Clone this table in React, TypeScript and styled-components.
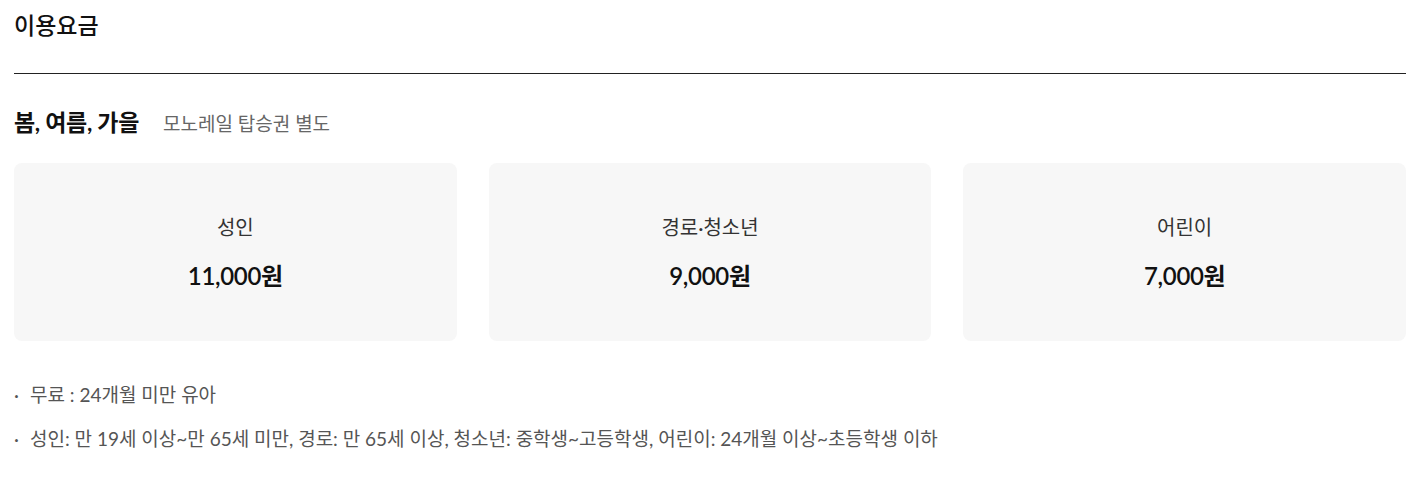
import React from "react";
import styled, { createGlobalStyle } from "styled-components";

const Global = createGlobalStyle`
  html, body { margin: 0; padding: 0; background: #fff; }
  body { font-family: Lato, "Noto Sans CJK KR", sans-serif; color: #111; }
`;

const Page = styled.div`
  padding: 0 14px;
`;

const Title = styled.h2`
  margin: 0;
  padding-top: 9px;
  height: 74px;
  box-sizing: border-box;
  font-size: 23px;
  font-weight: 500;
  line-height: 32px;
  color: #111;
  border-bottom: 1px solid #222;
`;

const SeasonRow = styled.div`
  display: flex;
  align-items: baseline;
  gap: 24px;
  margin-top: 32px;
`;

const Season = styled.h3`
  margin: 0;
  font-size: 23px;
  font-weight: 700;
  line-height: 32px;
  color: #111;
  letter-spacing: -0.3px;
`;

const SeasonNote = styled.span`
  font-size: 19px;
  color: #666;
`;

const Cards = styled.div`
  display: grid;
  grid-template-columns: repeat(3, 1fr);
  gap: 32px;
  margin-top: 25px;
`;

const Card = styled.div`
  background: #f7f7f7;
  border-radius: 8px;
  height: 178px;
  display: flex;
  flex-direction: column;
  align-items: center;
  justify-content: center;
  gap: 19px;
  padding-top: 1px;
  box-sizing: border-box;
`;

const Label = styled.div`
  font-size: 20px;
  color: #333;
  line-height: 28px;
`;

const Price = styled.div`
  font-size: 24px;
  font-weight: 600;
  color: #111;
  line-height: 32px;
  letter-spacing: -0.3px;
`;

const Notes = styled.ul`
  list-style: none;
  margin: 40px 0 0;
  padding: 0;
  display: flex;
  flex-direction: column;
  gap: 16px;
`;

const Note = styled.li`
  position: relative;
  padding-left: 16px;
  font-size: 19px;
  line-height: 28px;
  height: 28px;
  color: #555;
  &::before {
    content: "·";
    position: absolute;
    left: 0;
    top: 0;
    color: #555;
  }
`;

const fares = [
  { label: "성인", price: "11,000원" },
  { label: "경로·청소년", price: "9,000원" },
  { label: "어린이", price: "7,000원" },
];

export default function App() {
  return (
    <>
      <Global />
      <Page>
        <Title>이용요금</Title>
        <SeasonRow>
          <Season>봄, 여름, 가을</Season>
          <SeasonNote>모노레일 탑승권 별도</SeasonNote>
        </SeasonRow>
        <Cards>
          {fares.map((f) => (
            <Card key={f.label}>
              <Label>{f.label}</Label>
              <Price>{f.price}</Price>
            </Card>
          ))}
        </Cards>
        <Notes>
          <Note>무료 : 24개월 미만 유아</Note>
          <Note>
            성인: 만 19세 이상~만 65세 미만, 경로: 만 65세 이상, 청소년: 중학생~고등학생, 어린이: 24개월 이상~초등학생 이하
          </Note>
        </Notes>
      </Page>
    </>
  );
}
